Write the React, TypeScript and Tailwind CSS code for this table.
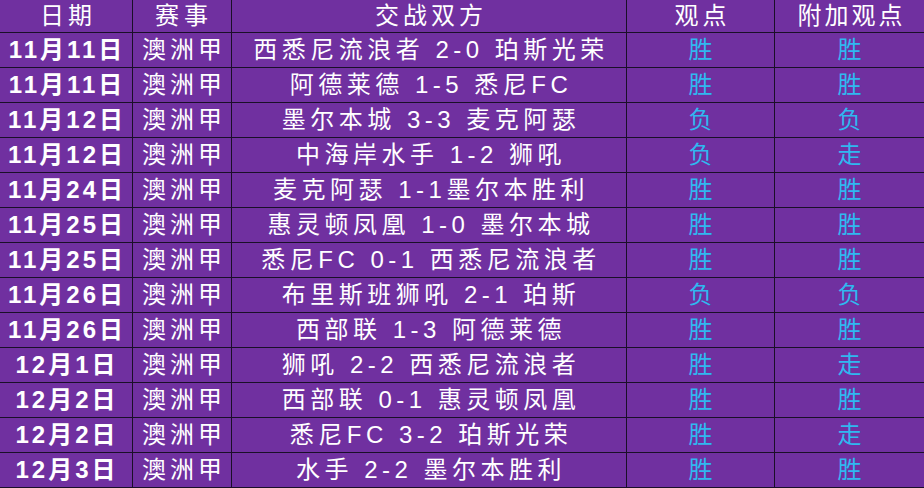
const rows: [string, string, string, string][] = [
  ["11月11日", "西悉尼流浪者 2-0 珀斯光荣", "胜", "胜"],
  ["11月11日", "阿德莱德 1-5 悉尼FC", "胜", "胜"],
  ["11月12日", "墨尔本城 3-3 麦克阿瑟", "负", "负"],
  ["11月12日", "中海岸水手 1-2 狮吼", "负", "走"],
  ["11月24日", "麦克阿瑟 1-1墨尔本胜利", "胜", "胜"],
  ["11月25日", "惠灵顿凤凰 1-0 墨尔本城", "胜", "胜"],
  ["11月25日", "悉尼FC 0-1 西悉尼流浪者", "胜", "胜"],
  ["11月26日", "布里斯班狮吼 2-1 珀斯", "负", "负"],
  ["11月26日", "西部联 1-3 阿德莱德", "胜", "胜"],
  ["12月1日", "狮吼 2-2 西悉尼流浪者", "胜", "走"],
  ["12月2日", "西部联 0-1 惠灵顿凤凰", "胜", "胜"],
  ["12月2日", "悉尼FC 3-2 珀斯光荣", "胜", "走"],
  ["12月3日", "水手 2-2 墨尔本胜利", "胜", "胜"],
]

const cell = "flex items-center justify-center border-r border-b border-[#1a0f28] whitespace-nowrap"

export default function App() {
  return (
    <div className="w-[924px] h-[488px] bg-[#7030a0] overflow-hidden font-['Liberation_Sans','Noto_Sans_CJK_SC',sans-serif] text-[24px] text-white">
      <div className="grid grid-cols-[133px_99px_395px_148px_149px] grid-rows-[33px_repeat(13,35px)]">
        <div className={cell + " tracking-[4px] pl-1"}>日期</div>
        <div className={cell + " tracking-[5px] pl-1"}>赛事</div>
        <div className={cell + " tracking-[4px] pl-1"}>交战双方</div>
        <div className={cell + " tracking-[4px] pl-1"}>观点</div>
        <div className={cell + " border-r-0 tracking-[3px] pl-1"}>附加观点</div>
        {rows.map((r, i) => (
          <div key={i} className="contents">
            <div className={cell + " font-bold tracking-[3px] pl-0.5"}>{r[0]}</div>
            <div className={cell + " tracking-[4px] pl-1"}>澳洲甲</div>
            <div className={cell + " tracking-[4.5px] pl-1"}>{r[1]}</div>
            <div className={cell + " text-[#2fb8f0]"}>{r[2]}</div>
            <div className={cell + " border-r-0 text-[#2fb8f0]"}>{r[3]}</div>
          </div>
        ))}
      </div>
    </div>
  )
}
